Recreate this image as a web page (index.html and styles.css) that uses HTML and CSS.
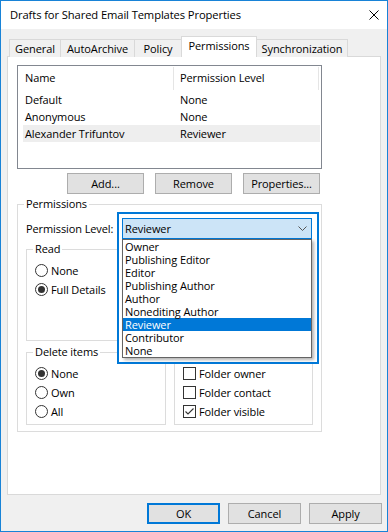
FILE: index.html
```html
<!DOCTYPE html>
<html>
<head>
<meta charset="utf-8">
<title>Drafts for Shared Email Templates Properties</title>
<link rel="stylesheet" href="styles.css">
</head>
<body>
<div class="window">
  <div class="titlebar">
    <span class="title">Drafts for Shared Email Templates Properties</span>
    <svg class="close" width="10" height="10" viewBox="0 0 10 10"><path d="M0.5 0.5 L9.5 9.5 M9.5 0.5 L0.5 9.5" stroke="#000" stroke-width="1" fill="none"/></svg>
  </div>
  <div class="content">
    <div class="tabs">
      <div class="tab tab-general">General</div>
      <div class="tab tab-auto">AutoArchive</div>
      <div class="tab tab-policy">Policy</div>
      <div class="tab tab-perm active">Permissions</div>
      <div class="tab tab-sync">Synchronization</div>
    </div>
    <div class="panel">
      <div class="listbox">
        <div class="lb-head">
          <div class="hc c1">Name</div>
          <div class="hc c2">Permission Level</div>
        </div>
        <div class="lb-row"><div class="rc1">Default</div><div class="rc2">None</div></div>
        <div class="lb-row"><div class="rc1">Anonymous</div><div class="rc2">None</div></div>
        <div class="lb-row selected"><div class="rc1">Alexander Trifuntov</div><div class="rc2">Reviewer</div></div>
      </div>
      <div class="lb-buttons">
        <button class="btn">Add...</button>
        <button class="btn">Remove</button>
        <button class="btn">Properties...</button>
      </div>
      <div class="group perms">
        <span class="group-label">Permissions</span>
        <div class="level-row"><span>Permission Level:</span></div>
        <div class="sub-grid">
          <div class="group sub">
            <span class="group-label">Read</span>
            <div class="opt"><span class="radio"></span><span>None</span></div>
            <div class="opt"><span class="radio on"></span><span>Full Details</span></div>
          </div>
          <div class="group sub"></div>
          <div class="group sub">
            <span class="group-label">Delete items</span>
            <div class="opt"><span class="radio on"></span><span>None</span></div>
            <div class="opt"><span class="radio"></span><span>Own</span></div>
            <div class="opt"><span class="radio"></span><span>All</span></div>
          </div>
          <div class="group sub">
            <div class="opt"><span class="check"></span><span>Folder owner</span></div>
            <div class="opt"><span class="check"></span><span>Folder contact</span></div>
            <div class="opt"><span class="check"><svg width="11" height="11" viewBox="0 0 11 11"><path d="M1.5 5.5 L4 8 L9.5 2.5" stroke="#333" stroke-width="1.1" fill="none"/></svg></span><span>Folder visible</span></div>
          </div>
        </div>
      </div>
      <div class="dropdown">
        <div class="combo">
          <span>Reviewer</span>
          <svg class="chev" width="9" height="5" viewBox="0 0 9 5"><path d="M0.5 0.5 L4.5 4.5 L8.5 0.5" stroke="#555" stroke-width="1" fill="none"/></svg>
        </div>
        <div class="dd-list">
          <div class="dd-item"><span>Owner</span></div>
          <div class="dd-item"><span>Publishing Editor</span></div>
          <div class="dd-item"><span>Editor</span></div>
          <div class="dd-item"><span>Publishing Author</span></div>
          <div class="dd-item"><span>Author</span></div>
          <div class="dd-item"><span>Nonediting Author</span></div>
          <div class="dd-item sel"><span>Reviewer</span></div>
          <div class="dd-item"><span>Contributor</span></div>
          <div class="dd-item"><span>None</span></div>
        </div>
      </div>
    </div>
    <div class="dlg-buttons">
      <button class="btn dbtn default">OK</button>
      <button class="btn dbtn">Cancel</button>
      <button class="btn dbtn">Apply</button>
    </div>
  </div>
</div>
</body>
</html>
```

FILE: styles.css
```css
* { box-sizing: border-box; }
html, body { margin: 0; padding: 0; }
body {
  width: 388px;
  height: 532px;
  font-family: "Open Sans", "Noto Sans", sans-serif;
  font-size: 11px;
  letter-spacing: -0.1px;
  color: #000;
  background: #fff;
}
.window {
  width: 388px;
  height: 532px;
  border: 1px solid #1883d7;
  background: #f0f0f0;
  display: flex;
  flex-direction: column;
}
.titlebar {
  height: 28px;
  background: #fff;
  display: flex;
  align-items: center;
  justify-content: space-between;
  padding: 0 8px 0 9px;
  flex: none;
}
.title { line-height: 16px; font-size: 11.2px; }
.close { display: block; margin-top: -1px; }
.content {
  flex: 1;
  padding: 7px 6px 7px 6px;
  display: flex;
  flex-direction: column;
}
.tabs {
  display: flex;
  align-items: flex-end;
  height: 21px;
  margin-bottom: -1px;
  padding-left: 2px;
  position: relative;
  z-index: 1;
  flex: none;
}
.tab {
  height: 18px;
  border: 1px solid #d9d9d9;
  border-bottom: none;
  margin-left: -1px;
  background: #f0f0f0;
  text-align: center;
  line-height: 17px;
  white-space: nowrap;
}
.tab:first-child { margin-left: 0; }
.tab.active { height: 21px; background: #fff; line-height: 18px; }
.tab-general { width: 52px; }
.tab-auto { width: 75px; }
.tab-policy { width: 48px; }
.tab-perm { width: 76px; }
.tab-sync { width: 92px; }

.panel {
  height: 439px;
  background: #fff;
  border: 1px solid #d9d9d9;
  position: relative;
  padding: 8px 0 0 9px;
  flex: none;
}
.listbox {
  width: 305px;
  height: 104px;
  border: 1px solid #828790;
  background: #fff;
}
.lb-head { display: flex; height: 25px; align-items: stretch; }
.hc {
  border-right: 1px solid #e5e5e5;
  margin: 1px 0 1px 0;
  line-height: 22px;
}
.hc.c1 { width: 156px; padding-left: 7px; }
.hc.c2 { width: 145px; padding-left: 6px; }
.lb-row {
  display: flex;
  height: 17px;
  line-height: 17px;
  margin: 0 1px 0 5px;
}
.lb-row.selected { background: #eeeeee; }
.rc1 { width: 151px; padding-left: 2px; }
.rc2 { padding-left: 6px; }
.lb-buttons {
  display: flex;
  justify-content: flex-end;
  gap: 11px;
  width: 303px;
  margin-top: 4px;
}
.btn {
  height: 21px;
  width: 77px;
  border: 1px solid #adadad;
  background: #e1e1e1;
  font: inherit;
  letter-spacing: inherit;
  color: #000;
  padding: 0;
  line-height: 18px;
}
.group {
  border: 1px solid #dcdcdc;
  position: relative;
}
.group-label {
  position: absolute;
  top: -9px;
  left: 6px;
  padding: 0 2px;
  background: #fff;
  line-height: 16px;
  white-space: nowrap;
}
.perms {
  width: 305px;
  height: 228px;
  margin-top: 10px;
  padding: 16px 0 0 8px;
}
.level-row { height: 16px; line-height: 16px; }
.sub-grid {
  display: grid;
  grid-template-columns: 140px 139px;
  grid-template-rows: 92px 73px;
  column-gap: 8px;
  row-gap: 11px;
  margin-top: 12px;
}
.group.sub { padding: 11px 0 0 8px; }
.opt {
  display: flex;
  width: fit-content;
  align-items: center;
  height: 19px;
  gap: 3px;
  white-space: nowrap;
}
.radio {
  width: 13px;
  height: 13px;
  border: 1px solid #333;
  border-radius: 50%;
  background: #fff;
  display: flex;
  align-items: center;
  justify-content: center;
  flex: none;
}
.radio.on::after {
  content: "";
  width: 7px;
  height: 7px;
  border-radius: 50%;
  background: #333;
}
.check {
  width: 13px;
  height: 13px;
  border: 1px solid #333;
  background: #fff;
  flex: none;
  display: flex;
}
.check svg { display: block; }

.dropdown {
  position: absolute;
  left: 109px;
  top: 155px;
  width: 202px;
  height: 152px;
  border: 2px solid #0078d7;
  background: #fff;
  padding: 4px 5px 4px 3px;
  z-index: 2;
}
.combo {
  height: 21px;
  border: 1px solid #0078d7;
  background: #cce4f7;
  display: flex;
  align-items: center;
  justify-content: space-between;
  padding: 0 4px 0 2px;
  line-height: 16px;
}
.chev { display: block; }
.dd-list {
  height: 119px;
  border: 1px solid #646464;
  background: #fff;
  box-shadow: 2px 2px 3px rgba(0, 0, 0, 0.3);
}
.dd-item {
  height: 13px;
  line-height: 13px;
  padding-left: 2px;
}
.dd-item.sel { background: #0078d7; color: #fff; }

.dlg-buttons {
  display: flex;
  justify-content: flex-end;
  gap: 8px;
  margin-top: 8px;
  margin-right: -1px;
  flex: none;
}
.dbtn { width: 73px; }
.dbtn.default { border: 2px solid #0078d7; line-height: 16px; }
```
